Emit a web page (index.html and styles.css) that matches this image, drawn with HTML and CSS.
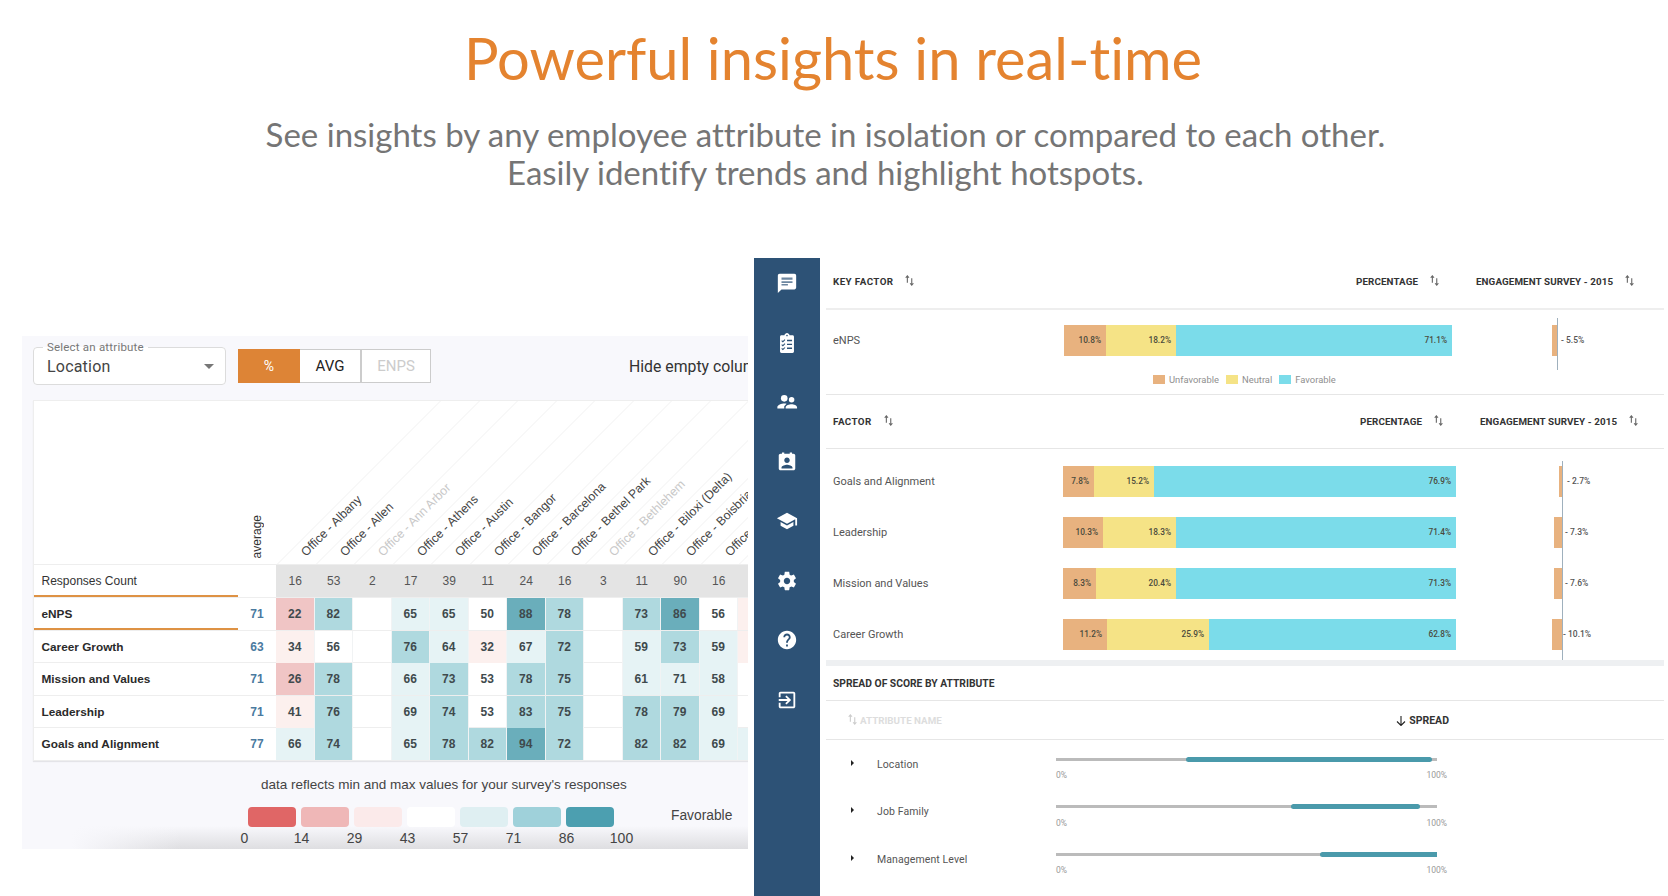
FILE: index.html
```html
<!DOCTYPE html>
<html lang="en">
<head>
  <meta charset="UTF-8">
  <meta name="viewport" content="width=device-width, initial-scale=1.0">
  <title>Powerful insights in real-time</title>
  <link rel="stylesheet" href="styles.css">
</head>
<body>

  <header class="hero">
    <h1>Powerful insights in real-time</h1>
    <p>See insights by any employee attribute in isolation or compared to each other.<br>Easily identify trends and highlight hotspots.</p>
  </header>

  <main class="shots">

    <!-- left screenshot: heatmap -->
    <section class="heat-panel">
      <div class="toolbar">
        <fieldset class="attr-select">
          <legend>Select an attribute</legend>
          <span>Location</span>
          <i class="caret-down"></i>
        </fieldset>
        <div class="btn-group">
          <div class="btn btn-on">%</div>
          <div class="btn">AVG</div>
          <div class="btn btn-off">ENPS</div>
        </div>
        <div class="hide-empty">Hide empty columns</div>
      </div>

      <div class="heat">
        <div class="heat-row heat-head">
          <div></div>
          <div class="th-avg"><span>average</span></div>
          <div class="th"><span>Office - Albany</span></div>
          <div class="th"><span>Office - Allen</span></div>
          <div class="th th-off"><span>Office - Ann Arbor</span></div>
          <div class="th"><span>Office - Athens</span></div>
          <div class="th"><span>Office - Austin</span></div>
          <div class="th"><span>Office - Bangor</span></div>
          <div class="th"><span>Office - Barcelona</span></div>
          <div class="th"><span>Office - Bethel Park</span></div>
          <div class="th th-off"><span>Office - Bethlehem</span></div>
          <div class="th"><span>Office - Biloxi (Delta)</span></div>
          <div class="th"><span>Office - Boisbriand</span></div>
          <div class="th"><span>Office - Boston</span></div>
          <div class="th"></div>
        </div>

        <div class="heat-row count-row">
          <div class="row-name row-line">Responses Count</div>
          <div></div>
          <div class="n">16</div><div class="n">53</div><div class="n">2</div><div class="n">17</div><div class="n">39</div><div class="n">11</div><div class="n">24</div><div class="n">16</div><div class="n">3</div><div class="n">11</div><div class="n">90</div><div class="n">16</div><div class="n"></div>
        </div>

        <div class="heat-row">
          <div class="row-name row-line"><b>eNPS</b></div>
          <div class="avg">71</div>
          <div class="c c-pink">22</div><div class="c c-mid">82</div><div class="c"></div><div class="c c-light">65</div><div class="c c-light">65</div><div class="c">50</div><div class="c c-dark">88</div><div class="c c-mid">78</div><div class="c"></div><div class="c c-mid">73</div><div class="c c-dark">86</div><div class="c">56</div><div class="c c-pale"></div>
        </div>

        <div class="heat-row">
          <div class="row-name"><b>Career Growth</b></div>
          <div class="avg">63</div>
          <div class="c c-pale">34</div><div class="c">56</div><div class="c"></div><div class="c c-mid">76</div><div class="c c-light">64</div><div class="c c-pale">32</div><div class="c c-light">67</div><div class="c c-mid">72</div><div class="c"></div><div class="c c-light">59</div><div class="c c-mid">73</div><div class="c c-light">59</div><div class="c c-pale"></div>
        </div>

        <div class="heat-row">
          <div class="row-name"><b>Mission and Values</b></div>
          <div class="avg">71</div>
          <div class="c c-pink">26</div><div class="c c-mid">78</div><div class="c"></div><div class="c c-light">66</div><div class="c c-mid">73</div><div class="c">53</div><div class="c c-mid">78</div><div class="c c-mid">75</div><div class="c"></div><div class="c c-light">61</div><div class="c c-light">71</div><div class="c c-light">58</div><div class="c"></div>
        </div>

        <div class="heat-row">
          <div class="row-name"><b>Leadership</b></div>
          <div class="avg">71</div>
          <div class="c c-pale">41</div><div class="c c-mid">76</div><div class="c"></div><div class="c c-light">69</div><div class="c c-mid">74</div><div class="c">53</div><div class="c c-mid">83</div><div class="c c-mid">75</div><div class="c"></div><div class="c c-mid">78</div><div class="c c-mid">79</div><div class="c c-light">69</div><div class="c"></div>
        </div>

        <div class="heat-row">
          <div class="row-name"><b>Goals and Alignment</b></div>
          <div class="avg">77</div>
          <div class="c c-light">66</div><div class="c c-mid">74</div><div class="c"></div><div class="c c-light">65</div><div class="c c-mid">78</div><div class="c c-mid">82</div><div class="c c-dark">94</div><div class="c c-mid">72</div><div class="c"></div><div class="c c-mid">82</div><div class="c c-mid">82</div><div class="c c-light">69</div><div class="c c-light"></div>
        </div>
      </div>

      <div class="scale-note">data reflects min and max values for your survey's responses</div>
      <div class="scale">
        <div class="swatches">
          <i class="s1"></i><i class="s2"></i><i class="s3"></i><i class="s4"></i><i class="s5"></i><i class="s6"></i><i class="s7"></i>
          <span class="scale-name">Favorable</span>
        </div>
        <div class="ticks">
          <span class="tick-first">0</span><span>14</span><span>29</span><span>43</span><span>57</span><span>71</span><span>86</span><span class="tick-last">100</span>
        </div>
      </div>
    </section>

    <!-- right screenshot: factors -->
    <section class="app">
      <nav class="side">
        <svg class="ico" viewBox="0 0 24 24"><path d="M20 2H4c-1.100 0-2 .9-2 2v19l4-4h14c1.100 0 2-.9 2-2V4c0-1.100-.9-2-2-2z"/><path class="ico-lines" d="M6 6h12v2.500H6zM6 10h12v2H6zM6 13h7v1.800H6z"/></svg>
        <svg class="ico" viewBox="0 0 24 24"><path fill-rule="evenodd" d="M18 3.500h-3.200C14.400 2 13.300 1 12 1S9.600 2 9.200 3.500H6c-1 0-1.600.7-1.600 1.600v16.300C4.400 22.300 5 23 6 23h12c1 0 1.600-.7 1.600-1.600V5.100c0-.9-.6-1.600-1.600-1.600zM12 3c.5 0 .9.400.9.900s-.4.900-.9.900-.9-.4-.9-.9.400-.9.900-.9zM12 8.500h5.500V10H12zM12 12.800h5.500v1.500H12zM12 17h5.500v1.500H12zM6.600 9l.9.900L9.400 8l.8.800-2.700 2.700-1.700-1.700zM6.600 13.300l.9.900 1.900-1.900.8.800-2.700 2.700-1.700-1.700zM6.600 17.500l.9.900 1.900-1.900.8.800-2.700 2.700-1.700-1.700z"/></svg>
        <svg class="ico" viewBox="0 0 24 24"><circle cx="9" cy="8" r="3.600"/><circle cx="17" cy="9.500" r="3"/><path d="M1.500 19v-1.500c0-2.500 4.500-4 7.500-4 .8 0 1.700.1 2.500.3L9 16.500V19zM10.500 19v-1c0-2.300 4-3.500 6.500-3.500s6 1.200 6 3.500v1z"/></svg>
        <svg class="ico" viewBox="0 0 24 24"><path fill-rule="evenodd" d="M19 3h-1.500V1.500h-2.500V3H9V1.500H6.500V3H5c-1.100 0-2 .9-2 2v14c0 1.100.9 2 2 2h14c1.100 0 2-.9 2-2V5c0-1.100-.9-2-2-2zM12 7c1.650 0 3 1.350 3 3s-1.350 3-3 3-3-1.350-3-3 1.350-3 3-3zm6 12H6v-1c0-2 4-3.100 6-3.100s6 1.100 6 3.100v1z"/></svg>
        <svg class="ico" viewBox="0 0 24 24"><path d="M5 13.180v4L12 21l7-3.820v-4L12 17l-7-3.820zM12 3L1 9l11 6 9-4.910V17h2V9L12 3z"/></svg>
        <svg class="ico" viewBox="0 0 24 24"><path d="M19.430 12.980c.04-.32.07-.64.07-.98s-.03-.66-.07-.98l2.110-1.650c.19-.15.24-.42.12-.64l-2-3.460c-.12-.22-.39-.3-.61-.22l-2.490 1c-.52-.4-1.080-.73-1.690-.98l-.38-2.650C14.460 2.180 14.250 2 14 2h-4c-.25 0-.46.18-.49.42l-.38 2.650c-.61.25-1.170.59-1.690.98l-2.490-1c-.23-.09-.49 0-.61.22l-2 3.460c-.13.22-.07.49.12.64l2.110 1.650c-.04.32-.07.65-.07.98s.03.66.07.98l-2.110 1.650c-.19.15-.24.42-.12.64l2 3.460c.12.22.39.3.61.22l2.490-1c.52.4 1.080.73 1.690.98l.38 2.650c.03.24.24.42.49.42h4c.25 0 .46-.18.49-.42l.38-2.650c.61-.25 1.170-.59 1.690-.98l2.490 1c.23.09.49 0 .61-.22l2-3.460c.12-.22.07-.49-.12-.64l-2.110-1.650zM12 15.500c-1.930 0-3.500-1.570-3.500-3.500s1.570-3.500 3.500-3.500 3.500 1.570 3.500 3.500-1.570 3.500-3.500 3.500z"/></svg>
        <svg class="ico" viewBox="0 0 24 24"><path d="M12 2C6.480 2 2 6.480 2 12s4.480 10 10 10 10-4.480 10-10S17.520 2 12 2zm1 17h-2v-2h2v2zm2.070-7.750l-.9.920C13.450 12.900 13 13.500 13 15h-2v-.5c0-1.100.45-2.100 1.170-2.830l1.240-1.260c.37-.36.59-.86.59-1.410 0-1.100-.9-2-2-2s-2 .9-2 2H8c0-2.210 1.790-4 4-4s4 1.790 4 4c0 .88-.36 1.680-.93 2.250z"/></svg>
        <svg class="ico" viewBox="0 0 24 24"><path d="M10.090 15.590L11.500 17l5-5-5-5-1.410 1.410L12.670 11H3v2h9.670l-2.580 2.590zM19 3H5c-1.110 0-2 .9-2 2v4h2V5h14v14H5v-4H3v4c0 1.100.89 2 2 2h14c1.100 0 2-.9 2-2V5c0-1.100-.9-2-2-2z"/></svg>
      </nav>

      <div class="app-body">
        <div class="head head-key">
          <span><span class="key-title">KEY FACTOR</span><svg class="sort" viewBox="0 0 9 10"><path d="M3 7V1M1.500 2.500L3 .8l1.500 1.700M7 3v6M5.500 7.500L7 9.200l1.500-1.700"/></svg></span>
          <span>PERCENTAGE<svg class="sort" viewBox="0 0 9 10"><path d="M3 7V1M1.500 2.500L3 .8l1.500 1.700M7 3v6M5.500 7.500L7 9.200l1.500-1.700"/></svg></span>
          <span>ENGAGEMENT SURVEY - 2015<svg class="sort" viewBox="0 0 9 10"><path d="M3 7V1M1.500 2.500L3 .8l1.500 1.700M7 3v6M5.500 7.500L7 9.200l1.500-1.700"/></svg></span>
        </div>

        <div class="key-block">
          <div class="row row-key">
            <div class="cell name">eNPS</div>
            <div class="cell bar">
              <span class="seg seg-a" style="width:42px">10.8%</span><span class="seg seg-b" style="width:70px">18.2%</span><span class="seg seg-c" style="width:276px">71.1%</span>
            </div>
            <div class="axis"><span class="cell neg" style="width:5px"></span></div>
            <div class="cell val" style="margin-left:1px">- 5.5%</div>
          </div>
          <div class="legend">
            <i class="seg-a"></i><span>Unfavorable</span>
            <i class="seg-b"></i><span>Neutral</span>
            <i class="seg-c"></i><span>Favorable</span>
          </div>
        </div>

        <div class="head head-factor">
          <span><span class="key-title">FACTOR</span><svg class="sort" viewBox="0 0 9 10"><path d="M3 7V1M1.500 2.500L3 .8l1.500 1.700M7 3v6M5.500 7.500L7 9.200l1.500-1.700"/></svg></span>
          <span>PERCENTAGE<svg class="sort" viewBox="0 0 9 10"><path d="M3 7V1M1.500 2.500L3 .8l1.500 1.700M7 3v6M5.500 7.500L7 9.200l1.500-1.700"/></svg></span>
          <span>ENGAGEMENT SURVEY - 2015<svg class="sort" viewBox="0 0 9 10"><path d="M3 7V1M1.500 2.500L3 .8l1.500 1.700M7 3v6M5.500 7.500L7 9.200l1.500-1.700"/></svg></span>
        </div>

        <div class="factors">
          <div class="row">
            <div class="cell name">Goals and Alignment</div>
            <div class="cell bar">
              <span class="seg seg-a" style="width:31px">7.8%</span><span class="seg seg-b" style="width:60px">15.2%</span><span class="seg seg-c" style="width:302px">76.9%</span>
            </div>
            <div class="axis"><span class="cell neg" style="width:3px"></span></div>
            <div class="cell val" style="margin-left:2px">- 2.7%</div>
          </div>
          <div class="row">
            <div class="cell name">Leadership</div>
            <div class="cell bar">
              <span class="seg seg-a" style="width:40px">10.3%</span><span class="seg seg-b" style="width:73px">18.3%</span><span class="seg seg-c" style="width:280px">71.4%</span>
            </div>
            <div class="axis"><span class="cell neg" style="width:8px"></span></div>
            <div class="cell val">- 7.3%</div>
          </div>
          <div class="row">
            <div class="cell name">Mission and Values</div>
            <div class="cell bar">
              <span class="seg seg-a" style="width:33px">8.3%</span><span class="seg seg-b" style="width:80px">20.4%</span><span class="seg seg-c" style="width:280px">71.3%</span>
            </div>
            <div class="axis"><span class="cell neg" style="width:8px"></span></div>
            <div class="cell val">- 7.6%</div>
          </div>
          <div class="row">
            <div class="cell name">Career Growth</div>
            <div class="cell bar">
              <span class="seg seg-a" style="width:44px">11.2%</span><span class="seg seg-b" style="width:102px">25.9%</span><span class="seg seg-c" style="width:247px">62.8%</span>
            </div>
            <div class="axis"><span class="cell neg" style="width:10px"></span></div>
            <div class="cell val" style="margin-left:-2px">- 10.1%</div>
          </div>
        </div>

        <div class="spread-title">SPREAD OF SCORE BY ATTRIBUTE</div>
        <div class="spread-head">
          <span class="attr-name"><svg class="sort" viewBox="0 0 9 10"><path d="M3 7V1M1.500 2.500L3 .8l1.500 1.700M7 3v6M5.500 7.500L7 9.200l1.500-1.700"/></svg>ATTRIBUTE NAME</span>
          <span class="spread-sort"><svg class="arrow" viewBox="0 0 10 10"><path d="M5 0v9M1 5.500L5 9.500l4-4"/></svg>SPREAD</span>
        </div>

        <div class="spread-row">
          <i class="caret-right"></i>
          <span class="name">Location</span>
          <div class="range">
            <div class="track"><span class="fill" style="margin-left:130px;width:246px"></span></div>
            <div class="ends"><span>0%</span><span>100%</span></div>
          </div>
        </div>
        <div class="spread-row">
          <i class="caret-right"></i>
          <span class="name">Job Family</span>
          <div class="range">
            <div class="track"><span class="fill" style="margin-left:235px;width:129px"></span></div>
            <div class="ends"><span>0%</span><span>100%</span></div>
          </div>
        </div>
        <div class="spread-row">
          <i class="caret-right"></i>
          <span class="name">Management Level</span>
          <div class="range">
            <div class="track"><span class="fill fill-end" style="margin-left:264px;width:117px"></span></div>
            <div class="ends"><span>0%</span><span>100%</span></div>
          </div>
        </div>
      </div>
    </section>

  </main>

</body>
</html>
```

FILE: styles.css
```css
html, body {
  height: 896px;
  overflow: hidden;
}
body {
  margin: 0;
  background-color: white;
  font-family: Roboto, sans-serif;
}

/* top heading */
.hero {
  text-align: center;
  height: 258px;
  font-family: Lato, sans-serif;
  font-variant-ligatures: none;
}
.hero h1 {
  margin: 0;
  padding: 22px 2px 0 0;
  font-size: 57.800px;
  line-height: 72px;
  font-weight: 400;
  color: #e4832f;
}
.hero p {
  margin: 21px 17px 0 0;
  font-size: 33px;
  line-height: 38px;
  font-weight: 400;
  color: #757575;
}

.shots {
  display: flex;
  align-items: flex-start;
  padding-left: 22px;
  gap: 6px;
}

/* heatmap panel */
.heat-panel {
  width: 726px;
  height: 513px;
  margin-top: 78px;
  box-sizing: border-box;
  padding: 4px 0 0 11px;
  overflow: hidden;
  background:
    linear-gradient(to right, #f8f8fc 50px, rgba(248, 248, 252, 0) 160px),
    linear-gradient(to bottom, #f8f8fc 490px, #dedee1 513px);
}
.toolbar {
  display: flex;
  height: 60px;
  white-space: nowrap;
}
.attr-select {
  box-sizing: border-box;
  flex-shrink: 0;
  width: 193px;
  height: 45px;
  margin: 0;
  padding: 0 12px 0 13px;
  display: flex;
  align-items: center;
  justify-content: space-between;
  background-color: white;
  border: 1px solid #dcdcdc;
  border-radius: 4px;
  color: #444;
  font-size: 16px;
  letter-spacing: 0.2px;
}
.attr-select legend {
  padding: 0 4px;
  margin-left: -4px;
  font-size: 11.500px;
  line-height: 14px;
  letter-spacing: 0.2px;
  color: #777;
}
.attr-select span {
  margin-top: -6px;
}
.caret-down {
  margin-top: -6px;
  margin-right: -1px;
  border-left: 5px solid transparent;
  border-right: 5px solid transparent;
  border-top: 5px solid #777;
}
.btn-group {
  display: flex;
  flex-shrink: 0;
  margin: 9px 0 0 12px;
  height: 34px;
}
.btn {
  box-sizing: border-box;
  width: 61px;
  line-height: 32px;
  text-align: center;
  font-size: 15px;
  background-color: white;
  color: #222;
  border: 1px solid #ccc;
  border-left: none;
}
.btn-on {
  width: 62px;
  font-size: 14px;
  background-color: #dd8436;
  border: 1px solid #dd8436;
  color: white;
}
.btn-off {
  width: 70px;
  border-left: 1px solid #ccc;
  color: #ccc;
}
.hide-empty {
  flex-shrink: 0;
  margin: 14px 0 0 198px;
  font-size: 15.800px;
  line-height: 26px;
  color: #333;
}

.heat {
  width: 742.500px;
  font-family: "Liberation Sans", Arial, sans-serif;
  font-size: 12px;
  color: #333;
  background-color: white;
  border-left: 1px solid #eee;
  box-shadow: 0 1px 1px rgba(0, 0, 0, 0.08);
}
.heat-row {
  display: grid;
  grid-template-columns: 204px 38px repeat(13, 38.500px);
  height: 32.500px;
  line-height: 32px;
  border-bottom: 1px solid #eee;
  box-sizing: border-box;
}
.heat-head {
  height: 165px;
  border-top: 1px solid #eee;
  overflow: hidden;
}
.th-avg {
  display: flex;
  justify-content: center;
  align-items: flex-end;
  padding-bottom: 6px;
}
.th-avg span {
  writing-mode: vertical-rl;
  transform: rotate(180deg);
  line-height: 14px;
}
.th {
  position: relative;
  display: flex;
  align-items: flex-end;
}
.th::before {
  content: "";
  position: absolute;
  left: 1px;
  bottom: 0;
  height: 100%;
  border-left: 1px solid #f2f2f2;
  transform: skewX(-45deg);
  transform-origin: bottom left;
}
.th span {
  flex-shrink: 0;
  white-space: nowrap;
  line-height: 14px;
  font-size: 12.300px;
  color: #444;
  transform-origin: left bottom;
  transform: translate(32px, -5px) rotate(-45deg);
}
.th-off span {
  color: #c8c8c8;
}
.row-name {
  padding-left: 7.500px;
}
.row-name b {
  color: #2a2a2a;
  font-size: 11.800px;
}
.row-line {
  border-bottom: 2px solid #de9244;
  height: 31.500px;
  box-sizing: border-box;
}
.count-row {
  height: 33px;
}
.count-row .row-line {
  height: 32px;
}
.n {
  background-color: #e4e4e4;
  text-align: center;
  color: #555;
}
.avg {
  text-align: center;
  font-weight: bold;
  color: #4a7a9f;
}
.c {
  text-align: center;
  font-weight: bold;
  color: #3f4a4d;
  border-right: 1px solid #f1f3f4;
  box-sizing: border-box;
}
.c-pink { background-color: #f0c5c5; }
.c-pale { background-color: #fcf0ee; }
.c-light { background-color: #e6f3f5; }
.c-mid { background-color: #afd9df; }
.c-dark { background-color: #6aaebb; }

.scale-note {
  margin: 14px 0 0 228px;
  font-family: "Liberation Sans", Arial, sans-serif;
  font-size: 13.500px;
  line-height: 20px;
  color: #444;
}
.scale {
  font-family: "Liberation Sans", Arial, sans-serif;
  color: #444;
}
.swatches {
  display: flex;
  gap: 5px;
  margin: 12px 0 0 215px;
  height: 20px;
}
.swatches i {
  width: 48px;
  border-radius: 4px;
}
.s1 { background-color: #e06666; }
.s2 { background-color: #efb7b7; }
.s3 { background-color: #fbeaea; }
.s4 { background-color: white; }
.s5 { background-color: #dfeff2; }
.s6 { background-color: #9fd1da; }
.s7 { background-color: #4c9fb0; }
.scale-name {
  margin: -1px 0 0 52px;
  font-size: 13.800px;
  line-height: 20px;
}
.ticks {
  display: flex;
  margin: 2px 0 0 185px;
  font-size: 14px;
  line-height: 18px;
}
.ticks span {
  width: 53px;
  text-align: center;
}
.ticks .tick-first { margin-right: 4px; }
.ticks .tick-last { margin-left: 2px; }

/* right app */
.app {
  display: flex;
  height: 638px;
  flex: 1;
  min-width: 0;
}
.side {
  box-sizing: border-box;
  width: 66px;
  flex-shrink: 0;
  padding-top: 10px;
  display: flex;
  flex-direction: column;
  align-items: center;
  gap: 29.500px;
  background-color: #2d5276;
}
.ico {
  width: 22px;
  height: 22px;
  fill: white;
  margin: 4px 0;
}
.ico-lines {
  fill: #6c86a0;
}
.app-body {
  width: 838px;
  margin-left: 6px;
  font-size: 11px;
  color: #555;
}
.head {
  display: grid;
  align-items: center;
  height: 50px;
  padding-left: 7px;
  border-bottom: 1px solid #e6e6e6;
  font-size: 9.800px;
  letter-spacing: 0.1px;
  font-weight: 700;
  color: #333;
}
.key-title {
  letter-spacing: 0.4px;
}
.head-key {
  grid-template-columns: 523px 120px 1fr;
  height: 46px;
  padding-bottom: 4px;
  border-bottom: 2px solid #eee;
}
.head-factor {
  grid-template-columns: 527px 120px 1fr;
  height: 51px;
  padding-bottom: 2px;
}
.sort {
  width: 10px;
  height: 11px;
  margin-left: 11px;
  fill: none;
  stroke: #666;
  stroke-width: 1;
  vertical-align: -1px;
}
.key-block {
  padding-top: 8px;
  border-bottom: 1px solid #e6e6e6;
}
.row {
  display: grid;
  grid-template-columns: 230px 393px 107px auto;
  height: 51px;
  padding-left: 7px;
  align-items: start;
}
.row-key {
  grid-template-columns: 231px 388px 106px auto;
  height: 52px;
}
.cell {
  margin-top: 5px;
  height: 31px;
  line-height: 31px;
}
.row-key .cell {
  margin-top: 7px;
}
.bar {
  display: flex;
  width: 100%;
}
.seg {
  box-sizing: border-box;
  text-align: right;
  padding-right: 5px;
  font-size: 8.300px;
  font-weight: 500;
  color: #4a4a3c;
}
.seg-a { background-color: #e8b27f; }
.seg-b { background-color: #f5e386; }
.seg-c { background-color: #7bdcea; }
.axis {
  display: flex;
  justify-content: flex-end;
  height: 100%;
  box-sizing: border-box;
  border-right: 1px solid #9fb0bd;
}
.neg {
  display: block;
  background-color: #e8b27f;
}
.val {
  font-size: 8.500px;
  font-weight: 500;
  color: #555;
  padding-left: 2px;
}
.legend {
  display: flex;
  align-items: center;
  height: 24px;
  margin-top: -3px;
  padding: 0 0 3px 327px;
  font-size: 9.400px;
  color: #8f8f8f;
}
.legend i {
  width: 12px;
  height: 9px;
  margin-right: 4px;
}
.legend span {
  margin-right: 7px;
}
.factors {
  padding-top: 12px;
}
.factors .row:last-child {
  height: 46px;
}
.factors .row:last-child .axis {
  height: 46px;
}
.spread-title {
  box-sizing: border-box;
  height: 41px;
  line-height: 36px;
  padding-left: 7px;
  font-size: 10.300px;
  font-weight: 700;
  color: #333;
  border-top: 6px solid #eef0f2;
  border-bottom: 1px solid #e6e6e6;
}
.spread-head {
  display: flex;
  align-items: center;
  justify-content: space-between;
  height: 38px;
  padding: 0 215px 0 21px;
  border-bottom: 1px solid #e6e6e6;
  font-size: 9.800px;
  font-weight: 700;
  color: #333;
}
.attr-name {
  color: #ddd;
}
.attr-name .sort {
  margin: 0 3px 0 0;
  stroke: #ccc;
}
.spread-sort {
  font-size: 10.500px;
}
.arrow {
  width: 10px;
  height: 10px;
  margin-right: 3px;
  fill: none;
  stroke: #222;
  stroke-width: 1.100;
  vertical-align: -2px;
}
.spread-row {
  display: grid;
  grid-template-columns: 26px 179px 391px;
  height: 47.500px;
  padding: 16.500px 0 0 25px;
  box-sizing: border-box;
  align-items: start;
}
.caret-right {
  margin-top: 3px;
  width: 0;
  border-top: 3px solid transparent;
  border-bottom: 3px solid transparent;
  border-left: 3.500px solid #222;
}
.spread-row .name {
  margin-top: 1px;
  font-size: 10.500px;
  line-height: 14px;
  letter-spacing: 0.1px;
}
.track {
  display: flex;
  width: 381px;
  height: 5px;
  background: linear-gradient(#bbb, #bbb) center / 100% 3px no-repeat;
}
.fill {
  height: 5px;
  border-radius: 3px;
  background-color: #4a9aab;
}
.fill-end {
  border-radius: 3px 0 0 3px;
}
.ends {
  display: flex;
  justify-content: space-between;
  margin-top: 8.500px;
  font-size: 8.500px;
  line-height: 10px;
  color: #999;
}
```
